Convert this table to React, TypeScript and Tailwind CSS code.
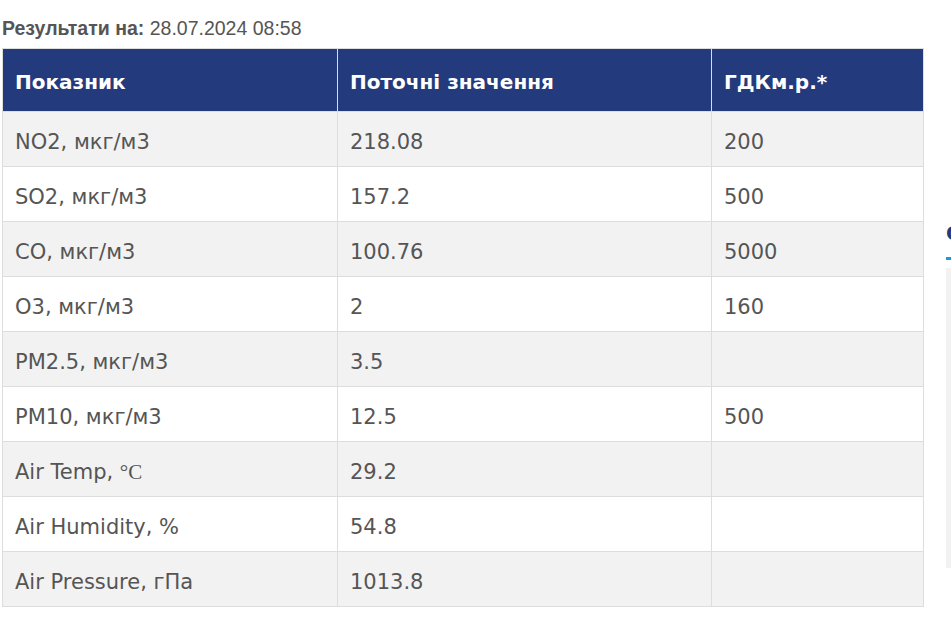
const rows: [string, string, string][] = [
  ['NO2, мкг/м3', '218.08', '200'],
  ['SO2, мкг/м3', '157.2', '500'],
  ['CO, мкг/м3', '100.76', '5000'],
  ['O3, мкг/м3', '2', '160'],
  ['PM2.5, мкг/м3', '3.5', ''],
  ['PM10, мкг/м3', '12.5', '500'],
  ['Air Temp, ', '29.2', ''],
  ['Air Humidity, %', '54.8', ''],
  ['Air Pressure, гПа', '1013.8', ''],
];

export default function App() {
  return (
    <div className="flex h-[634px] w-[951px] overflow-hidden bg-white">
      <div className="flex w-[923px] shrink-0 flex-col pt-[17px] pl-[2px]">
        <p className="text-[19.5px] leading-[23px] text-[#555] font-['Liberation_Sans',Arial,sans-serif]">
          <b>Результати на:</b> 28.07.2024 08:58
        </p>
        <table className="mt-[8px] w-[921px] border-collapse table-fixed font-['DejaVu_Sans',sans-serif] text-[21px] leading-[24px] text-[#555]">
          <colgroup>
            <col className="w-[335px]" />
            <col className="w-[374px]" />
            <col className="w-[212px]" />
          </colgroup>
          <thead>
            <tr className="h-[63px] bg-[#233a7c] text-white text-[20px]">
              <th className="border border-[#dddddd] px-[12px] pt-[3px] text-left font-bold">Показник</th>
              <th className="border border-[#dddddd] px-[12px] pt-[3px] text-left font-bold">Поточні значення</th>
              <th className="border border-[#dddddd] px-[12px] pt-[3px] text-left font-bold">ГДКм.р.*</th>
            </tr>
          </thead>
          <tbody>
            {rows.map((r, i) => (
              <tr key={i} className={`h-[55px] ${i % 2 === 0 ? 'bg-[#f2f2f2]' : 'bg-white'}`}>
                <td className="border border-[#dddddd] px-[12px] pt-[5px] align-middle">
                  {r[0]}
                  {i === 6 && <span className="font-['Liberation_Serif',serif]">°C</span>}
                </td>
                <td className="border border-[#dddddd] px-[12px] pt-[5px] align-middle">{r[1]}</td>
                <td className="border border-[#dddddd] px-[12px] pt-[5px] align-middle">{r[2]}</td>
              </tr>
            ))}
          </tbody>
        </table>
      </div>
      <div className="ml-[23px] flex flex-col pt-[222px]">
        <span className="text-[20px] font-bold leading-[22px] text-[#233a7c] font-['DejaVu_Sans',sans-serif]">О</span>
        <div className="mt-[13px] h-[3px] w-[20px] bg-[#1e9ad6]" />
        <div className="mt-[8px] h-[300px] w-[20px] bg-[#f2f2f2]" />
      </div>
    </div>
  );
}
